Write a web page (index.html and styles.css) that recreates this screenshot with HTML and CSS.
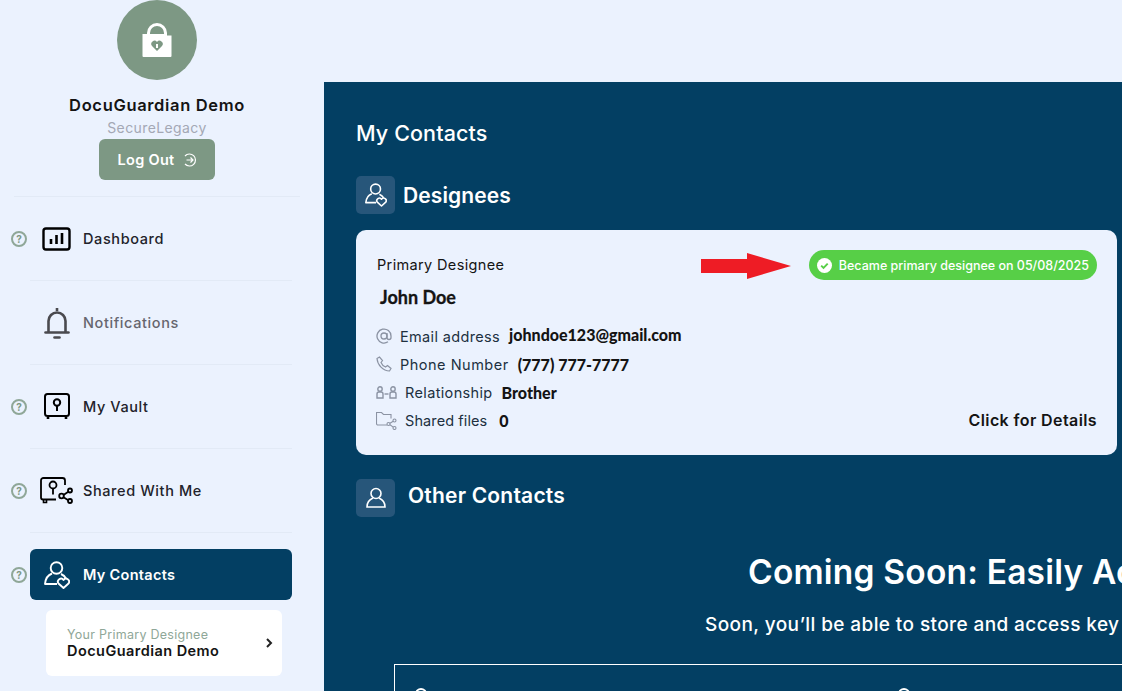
FILE: index.html
```html
<!DOCTYPE html>
<html lang="en">
<head>
    <meta charset="UTF-8">
    <title>My Contacts</title>
    <link rel="stylesheet" href="styles.css">
</head>
<body>
    <aside class="sidebar">
        <div class="profile">
            <div class="avatar">
                <svg width="34" height="34" viewBox="0 0 34 34"><path d="M8.5 14v-4a8.500 8.500 0 0 1 17 0v4" fill="none" stroke="#fff" stroke-width="3"/><path d="M2.500 11H24l1 1.500h6.500V33a1 1 0 0 1-1 1h-27a1 1 0 0 1-1-1z" fill="#fff"/><path d="M17 28l-5-5a3.200 3.200 0 0 1 5-4 3.200 3.200 0 0 1 5 4z" fill="#7d9884"/><rect x="16" y="21" width="2" height="4" fill="#fff"/></svg>
            </div>
            <div class="profile-name">DocuGuardian Demo</div>
            <div class="profile-org">SecureLegacy</div>
            <button class="logout">Log Out
                <svg width="14" height="14" viewBox="0 0 14 14" fill="none" stroke="#fff" stroke-width="1.2"><path d="M2 3a6 6 0 1 1 0 8"/><path d="M3.500 7H10M7.500 4.500L10 7 7.500 9.500"/></svg>
            </button>
        </div>
        <nav class="menu">
            <div class="menu-row">
                <span class="help">?</span>
                <a class="menu-item">
                    <span class="menu-icon"><svg width="30" height="24" viewBox="0 0 30 24"><rect x="1.500" y="1.500" width="26" height="21" rx="2.500" fill="none" stroke="#000" stroke-width="2.4"/><path d="M9 17v-5M14.500 17V8M20 17V6" stroke="#000" stroke-width="2.6"/></svg></span>
                    <span class="menu-text">Dashboard</span>
                </a>
            </div>
            <div class="menu-row">
                <a class="menu-item muted">
                    <span class="menu-icon"><svg width="26" height="32" viewBox="0 0 26 32" fill="none" stroke="#4a4a4f" stroke-width="2.6"><path d="M13 1v3"/><path d="M4.500 25V14a8.500 8.500 0 0 1 17 0v11"/><path d="M1.500 25.500h23" stroke-linecap="round"/><path d="M10.500 30.500h5" stroke-linecap="round"/></svg></span>
                    <span class="menu-text">Notifications</span>
                </a>
            </div>
            <div class="menu-row">
                <span class="help">?</span>
                <a class="menu-item">
                    <span class="menu-icon"><svg width="26" height="27" viewBox="0 0 26 27" fill="none" stroke="#000" stroke-width="2"><rect x="1" y="1" width="24" height="22" rx="2.500"/><circle cx="13" cy="9.500" r="3.200"/><path d="M13 13v5"/><path d="M4 24v2M22 24v2" stroke-width="2.6"/></svg></span>
                    <span class="menu-text">My Vault</span>
                </a>
            </div>
            <div class="menu-row">
                <span class="help">?</span>
                <a class="menu-item">
                    <span class="menu-icon"><svg width="33" height="27" viewBox="0 0 33 27" fill="none" stroke="#000" stroke-width="1.8"><path d="M25 8V3.500A2.500 2.500 0 0 0 22.500 1H3.500A2.500 2.500 0 0 0 1 3.500v17A2 2 0 0 0 3 22.500h13"/><path d="M3.500 23v2.500h3V23" stroke-width="1.6"/><circle cx="13" cy="8" r="3.500"/><path d="M13 11.500v6"/><circle cx="30" cy="13.500" r="2"/><circle cx="21.500" cy="19" r="2.300"/><circle cx="30" cy="24" r="2"/><path d="M23.500 18l4.800-3.300M23.500 20.200l4.800 3"/></svg></span>
                    <span class="menu-text">Shared With Me</span>
                </a>
            </div>
            <div class="menu-row no-border">
                <span class="help">?</span>
                <a class="menu-item active">
                    <span class="menu-icon"><svg width="26" height="28" viewBox="0 0 26 28" fill="none" stroke="#fff" stroke-width="1.9" stroke-linejoin="round"><circle cx="12.500" cy="7" r="5.800"/><path d="M8 12.500C4 14 1.500 17.500 1 23h12"/><path d="M17 13c2.500 1 4 2.500 5 4.500"/><path d="M19.500 27l-5-4.500a3 3 0 0 1 5-3.500 3 3 0 0 1 5 3.500z" fill="#033f63"/></svg></span>
                    <span class="menu-text">My Contacts</span>
                </a>
            </div>
            <div class="sub-card">
                <div>
                    <div class="sub-label">Your Primary Designee</div>
                    <div class="sub-name">DocuGuardian Demo</div>
                </div>
                <svg width="7" height="10" viewBox="0 0 7 10" fill="none" stroke="#222" stroke-width="2"><path d="M1 1l4 4-4 4"/></svg>
            </div>
        </nav>
    </aside>

    <main class="content">
        <h1 class="page-title">My Contacts</h1>

        <div class="section-head">
            <span class="section-icon"><svg width="22" height="24" viewBox="0 0 26 28" fill="none" stroke="#fff" stroke-width="1.9" stroke-linejoin="round"><circle cx="12.500" cy="7" r="5.800"/><path d="M8 12.500C4 14 1.500 17.500 1 23h12"/><path d="M17 13c2.500 1 4 2.500 5 4.500"/><path d="M19.500 27l-5-4.500a3 3 0 0 1 5-3.500 3 3 0 0 1 5 3.500z" fill="#27567a"/></svg></span>
            <h2>Designees</h2>
        </div>

        <section class="card">
            <div class="card-top">
                <span class="card-label">Primary Designee</span>
                <div class="card-status">
                    <svg class="arrow" width="90" height="26" viewBox="0 0 90 26"><path d="M0 6h46V0l44 13-44 13v-6H0z" fill="#ee1c25"/></svg>
                    <span class="badge">
                        <svg width="15" height="15" viewBox="0 0 15 15"><circle cx="7.500" cy="7.500" r="7.500" fill="#fff"/><path d="M4.200 7.700l2.300 2.300 4.200-4.400" fill="none" stroke="#57cf47" stroke-width="1.9"/></svg>
                        Became primary designee on 05/08/2025
                    </span>
                </div>
            </div>
            <div class="card-name">John Doe</div>
            <ul class="details">
                <li>
                    <svg width="16" height="16" viewBox="0 0 16 16" fill="none" stroke="#8b93a3" stroke-width="1.3"><circle cx="8" cy="8" r="3"/><path d="M11 5v4.500a2 2 0 0 0 4 0V8a7 7 0 1 0-3 5.800"/></svg>
                    <span class="field">Email address</span><b class="raised">johndoe123@gmail.com</b>
                </li>
                <li>
                    <svg width="16" height="16" viewBox="0 0 16 16" fill="none" stroke="#8b93a3" stroke-width="1.2"><path d="M1 2.500L3.500 1l3 3.500L5 6.500c.8 2 2.500 3.700 4.500 4.500l2-1.500 3.500 3-1.500 2.500C7 15 1.500 9 1 2.500z"/></svg>
                    <span class="field phone">Phone Number</span><b>(777) 777-7777</b>
                </li>
                <li>
                    <svg width="21" height="13" viewBox="0 0 21 13" fill="none" stroke="#8b93a3" stroke-width="1.4"><circle cx="4" cy="3" r="2.200"/><path d="M1 12V8a2 2 0 0 1 2-2h2a2 2 0 0 1 2 2v4z"/><circle cx="17" cy="3" r="2.200"/><path d="M14 12V8a2 2 0 0 1 2-2h2a2 2 0 0 1 2 2v4z"/><path d="M8.500 8h4"/></svg>
                    <span class="field">Relationship</span><b>Brother</b>
                </li>
                <li>
                    <svg width="21" height="19" viewBox="0 0 21 19" fill="none" stroke="#8b93a3" stroke-width="1.1"><path d="M11 14H2a1.500 1.500 0 0 1-1.500-1.500v-11h5l2 2h7.500v4"/><circle cx="18.500" cy="9.500" r="1.500"/><circle cx="12.500" cy="13" r="1.500"/><circle cx="18.500" cy="17" r="1.500"/><path d="M14 12.300l3.200-2M14 13.800l3.200 2.300"/></svg>
                    <span class="field narrow">Shared files</span><b class="count">0</b>
                    <a class="details-link">Click for Details</a>
                </li>
            </ul>
        </section>

        <div class="section-head other">
            <span class="section-icon"><svg width="22" height="22" viewBox="0 0 22 22" fill="none" stroke="#fff" stroke-width="1.6"><circle cx="11" cy="6.500" r="5"/><path d="M8 11c-3.500 1.500-6 4-6 9h18c0-5-2.500-7.500-6-9"/></svg></span>
            <h2>Other Contacts</h2>
        </div>

        <div class="coming">
            <h3>Coming Soon: Easily Access Your Important Contacts</h3>
            <p>Soon, you’ll be able to store and access key contacts in one secure place for your family</p>
            <div class="coming-box">
                <span class="box-dot"></span>
                <span class="box-dot"></span>
            </div>
        </div>
    </main>
</body>
</html>
```

FILE: styles.css
```css
* {
    margin: 0;
    padding: 0;
    box-sizing: border-box;
}

html, body {
    width: 1122px;
    height: 691px;
    overflow: hidden;
}

body {
    font-family: 'Inter', 'Liberation Sans', sans-serif;
    background: #ebf2fe;
    color: #141414;
    display: flex;
}

/* sidebar */
.sidebar {
    width: 324px;
    flex-shrink: 0;
}

.profile {
    display: flex;
    flex-direction: column;
    align-items: center;
    width: 314px;
    margin-bottom: 16px;
}

.avatar {
    width: 80px;
    height: 80px;
    border-radius: 50%;
    background: #7d9884;
    display: flex;
    align-items: center;
    justify-content: center;
}

.profile-name {
    margin-top: 16px;
    font-size: 16.5px;
    line-height: 19px;
    font-weight: 600;
    letter-spacing: 0.65px;
}

.profile-org {
    margin-top: 4px;
    font-size: 14px;
    line-height: 17px;
    color: #a4a8b5;
    letter-spacing: 0.4px;
}

.logout {
    margin-top: 3px;
    width: 116px;
    height: 41px;
    border: none;
    border-radius: 6px;
    background: #7d9884;
    color: white;
    font-family: inherit;
    font-size: 14.5px;
    font-weight: 600;
    letter-spacing: 0.3px;
    display: flex;
    align-items: center;
    justify-content: center;
    gap: 8px;
}

.menu {
    width: 286px;
    border-top: 1px solid #e2eaf6;
    margin-left: 14px;
}

.menu-row {
    height: 84px;
    margin-left: 16px;
    margin-right: 8px;
    display: flex;
    align-items: center;
    position: relative;
    border-bottom: 1px solid #e2eaf6;
}

.menu-row.no-border {
    border-bottom: none;
    height: 77px;
    padding-top: 6px;
}

.help {
    position: absolute;
    left: -19px;
    width: 16px;
    height: 16px;
    border: 2px solid #8fa798;
    border-radius: 50%;
    color: #7d9884;
    font-size: 10px;
    font-weight: 700;
    line-height: 12px;
    text-align: center;
}

.menu-item {
    width: 100%;
    height: 51px;
    display: flex;
    align-items: center;
    padding-left: 10px;
    font-size: 14.5px;
    font-weight: 500;
    letter-spacing: 0.6px;
    border-radius: 6px;
    color: #22222a;
}

.menu-item.muted {
    color: #66666e;
}

.menu-item.active {
    background: #033f63;
    color: white;
    font-weight: 600;
    letter-spacing: 0.3px;
}

.menu-icon {
    width: 33px;
    margin-right: 10px;
    display: flex;
    justify-content: center;
}

.sub-card {
    margin-left: 32px;
    width: 236px;
    height: 66px;
    background: white;
    border-radius: 6px;
    padding: 0 9px 0 21px;
    display: flex;
    align-items: center;
    justify-content: space-between;
}

.sub-label {
    font-size: 12.5px;
    line-height: 15px;
    color: #8fa798;
    letter-spacing: 0.27px;
}

.sub-name {
    font-size: 14.5px;
    line-height: 18px;
    font-weight: 600;
    letter-spacing: 0.45px;
}

/* main panel */
.content {
    width: 798px;
    height: 609px;
    margin-top: 82px;
    background: #033f63;
    color: white;
    padding: 37px 0 0 32px;
    overflow: hidden;
}

.page-title {
    font-size: 21.5px;
    line-height: 28px;
    font-weight: 500;
    letter-spacing: 0.1px;
}

.section-head {
    margin-top: 29px;
    display: flex;
    align-items: center;
    gap: 8px;
}

.section-head h2 {
    font-size: 21px;
    font-weight: 600;
    letter-spacing: 0.1px;
}

.section-head.other {
    margin-top: 24px;
    gap: 13px;
}

.section-head.other h2 {
    margin-bottom: 6px;
    letter-spacing: 0.2px;
}

.section-icon {
    width: 39px;
    height: 38px;
    background: #27567a;
    border-radius: 5px;
    display: flex;
    align-items: center;
    justify-content: center;
}

.card {
    margin-top: 16px;
    width: 761px;
    height: 225px;
    background: #ebf2fe;
    color: #141414;
    border-radius: 10px;
    padding: 20px 20px 0;
}

.card-top {
    display: flex;
    align-items: center;
    justify-content: space-between;
    height: 30px;
    margin-bottom: 5px;
}

.card-label {
    margin-left: 1px;
    margin-bottom: 2px;
    font-size: 14.5px;
    letter-spacing: 0.35px;
}

.card-status {
    display: flex;
    align-items: center;
    gap: 18px;
}

.arrow {
    margin-top: 1px;
}

.badge {
    height: 30px;
    border-radius: 15px;
    background: #57cf47;
    color: white;
    font-size: 12.5px;
    font-weight: 500;
    display: flex;
    align-items: center;
    gap: 7px;
    padding: 0 8px;
}

.card-name {
    font-family: 'Lato', sans-serif;
    font-size: 18px;
    line-height: 24px;
    font-weight: 700;
    margin-left: 4px;
    -webkit-text-stroke: 0.3px #141414;
}

.details {
    list-style: none;
    margin-top: 13px;
}

.details li {
    height: 28px;
    display: flex;
    align-items: center;
    gap: 8px;
    font-size: 14.5px;
    letter-spacing: 0.35px;
    position: relative;
}

.details b {
    font-family: 'Lato', sans-serif;
    font-size: 16px;
    font-weight: 900;
    letter-spacing: 0;
    margin-left: 1px;
}

.details b.raised {
    margin-bottom: 4px;
}

.field {
    color: #20303f;
}

.field.phone {
    letter-spacing: 0.5px;
}

.field.narrow {
    letter-spacing: 0.1px;
}

.details .count {
    margin-left: 4px;
}

.details-link {
    position: absolute;
    right: 0;
    font-size: 16px;
    font-weight: 600;
    letter-spacing: 0.4px;
}

/* coming soon block */
.coming {
    margin-top: 33px;
    width: 1100px;
    margin-left: -32px;
    padding-left: 70px;
}

.coming h3 {
    font-size: 33.5px;
    line-height: 44px;
    font-weight: 600;
    letter-spacing: 0.2px;
    white-space: nowrap;
    padding-left: 354px;
}

.coming p {
    margin-top: 19px;
    font-size: 19px;
    line-height: 24px;
    font-weight: 500;
    letter-spacing: 0.4px;
    white-space: nowrap;
    padding-left: 311px;
}

.coming-box {
    margin-top: 27px;
    width: 1000px;
    height: 80px;
    border: 1px solid white;
    display: flex;
    padding: 23px 20px 0;
    gap: 471px;
}

.box-dot {
    width: 12px;
    height: 12px;
    border: 2px solid white;
    border-radius: 50%;
}
```
